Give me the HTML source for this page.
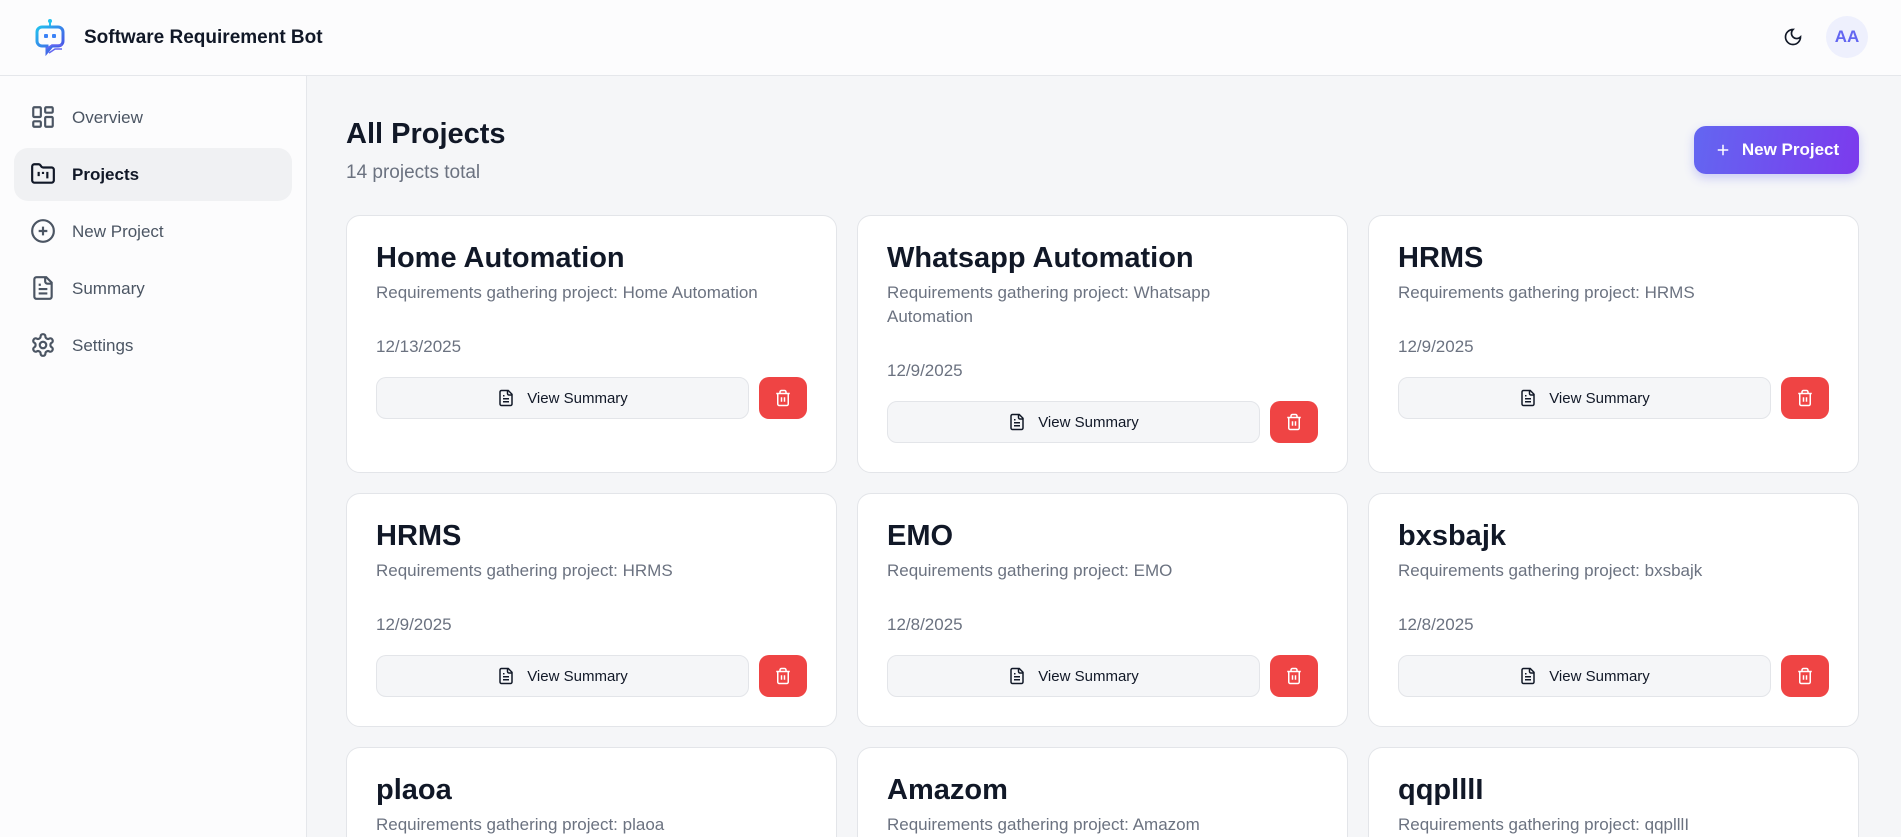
<!DOCTYPE html>
<html style="width:1901px;height:837px;overflow:hidden"><head><meta charset="utf-8"><style>
*{box-sizing:border-box;margin:0;padding:0}
body{width:1901px;height:837px;overflow:hidden;font-family:"Liberation Sans",sans-serif;background:#f5f6f8;color:#111827;position:relative}
.hdr{position:absolute;left:0;top:0;width:1901px;height:76px;background:#fcfcfd;border-bottom:1px solid #e5e7eb}
.hdr .title{position:absolute;left:84px;top:27px;font-size:19px;font-weight:600;color:#111827}
.side{position:absolute;left:0;top:76px;width:307px;height:761px;background:#fcfcfd;border-right:1px solid #e5e7eb}
.nav{position:absolute;left:14px;width:278px;height:53px;border-radius:14px;display:flex;align-items:center}
.nav svg{position:absolute;left:16px;top:13px}
.nav span{position:absolute;left:58px;font-size:17px;color:#4b5563}
.nav.act{background:#f0f1f3}
.nav.act span{color:#111827;font-weight:600}
h1{position:absolute;left:346px;top:118px;font-size:29px;font-weight:700;color:#111827;white-space:nowrap}
.sub{position:absolute;left:346px;top:162px;font-size:19px;color:#6b7280;white-space:nowrap}
.np{position:absolute;left:1694px;top:126px;width:165px;height:48px;border-radius:12px;background:linear-gradient(100deg,#6366f1,#7c3aed);color:#fff;font-size:17px;font-weight:700;display:flex;align-items:center;justify-content:center;gap:10px;box-shadow:0 4px 10px rgba(99,102,241,.3)}
.clip{position:absolute;left:0;top:0;width:1901px;height:837px;overflow:hidden}
.grid{position:absolute;left:346px;top:215px;width:1514px;display:grid;grid-template-columns:491px 491px 491px;column-gap:20px;row-gap:20px}
.card{background:#fff;border:1px solid #e3e5e9;border-radius:14px;padding:26px 29px 29px}
.card.last{height:90px;overflow:hidden;border-bottom:none;border-bottom-left-radius:0;border-bottom-right-radius:0}
.card h2{font-size:29px;line-height:32px;font-weight:700;color:#111827}
.card .d{margin-top:7px;font-size:17px;line-height:24px;color:#6b7280}
.card .dt{margin-top:30px;font-size:17px;line-height:24px;color:#6b7280}
.row{margin-top:18px;display:flex;gap:10px;height:42px}
.vs{flex:1;border:1px solid #e3e5e9;background:#f5f6f8;border-radius:10px;display:flex;align-items:center;justify-content:center;gap:12px;font-size:15px;font-weight:500;color:#111827}
.del{width:48px;border-radius:10px;background:#ef4444;display:flex;align-items:center;justify-content:center}
</style></head><body>
<div class="clip">
<div class="hdr">
<svg style="position:absolute;left:34px;top:18px" width="32" height="40" viewBox="0 0 32 40"><defs><linearGradient id="g" x1="0" y1="0" x2="1" y2="1"><stop offset="0" stop-color="#22c1ee"/><stop offset="1" stop-color="#4f46e5"/></linearGradient></defs>
<line x1="16" y1="3" x2="16" y2="9" stroke="#22c1ee" stroke-width="2"/><circle cx="16" cy="3" r="2" fill="#22c1ee"/>
<path d="M8 9h16a5 5 0 0 1 5 5v9a5 5 0 0 1-5 5h-6l-5 6v-6H8a5 5 0 0 1-5-5v-9a5 5 0 0 1 5-5z" fill="none" stroke="url(#g)" stroke-width="3"/>
<rect x="10" y="16" width="4" height="4" rx="1" fill="#3b82f6"/><rect x="18" y="16" width="4" height="4" rx="1" fill="#3b82f6"/>
<path d="M12 31l6-4h10M15 35l6-4h7" stroke="#6366f1" stroke-width="1.5" fill="none"/></svg>
<div class="title">Software Requirement Bot</div>
<svg style="position:absolute;left:1783px;top:27px" width="20" height="20" viewBox="0 0 24 24" fill="none" stroke="#111827" stroke-width="2" stroke-linecap="round"><path d="M12 3a6 6 0 0 0 9 9 9 9 0 1 1-9-9z"/></svg>
<div style="position:absolute;left:1826px;top:16px;width:42px;height:42px;border-radius:50%;background:#eef0fd;color:#6366f1;font-size:17px;font-weight:600;display:flex;align-items:center;justify-content:center">AA</div>
</div>
<div class="side">
<div class="nav" style="top:15px"><svg width="26" height="26" viewBox="0 0 24 24" fill="none" stroke="#4b5563" stroke-width="2"><rect x="3" y="3" width="7" height="9" rx="1"/><rect x="14" y="3" width="7" height="5" rx="1"/><rect x="14" y="12" width="7" height="9" rx="1"/><rect x="3" y="16" width="7" height="5" rx="1"/></svg><span>Overview</span></div>
<div class="nav act" style="top:72px"><svg width="26" height="26" viewBox="0 0 24 24" fill="none" stroke="#111827" stroke-width="2"><path d="M4 20h16a2 2 0 0 0 2-2V8a2 2 0 0 0-2-2h-7.9a2 2 0 0 1-1.7-.9l-.8-1.2A2 2 0 0 0 7.9 3H4a2 2 0 0 0-2 2v13a2 2 0 0 0 2 2z"/><path d="M8 10v4M12 10v2M16 10v6"/></svg><span>Projects</span></div>
<div class="nav" style="top:129px"><svg width="26" height="26" viewBox="0 0 24 24" fill="none" stroke="#4b5563" stroke-width="2"><circle cx="12" cy="12" r="10"/><path d="M8 12h8M12 8v8"/></svg><span>New Project</span></div>
<div class="nav" style="top:186px"><svg width="26" height="26" viewBox="0 0 24 24" fill="none" stroke="#4b5563" stroke-width="2"><path d="M15 2H6a2 2 0 0 0-2 2v16a2 2 0 0 0 2 2h12a2 2 0 0 0 2-2V7z"/><path d="M14 2v4a2 2 0 0 0 2 2h4M10 9H8M16 13H8M16 17H8"/></svg><span>Summary</span></div>
<div class="nav" style="top:243px"><svg width="26" height="26" viewBox="0 0 24 24" fill="none" stroke="#4b5563" stroke-width="2"><path d="M12.22 2h-.44a2 2 0 0 0-2 2v.18a2 2 0 0 1-1 1.73l-.43.25a2 2 0 0 1-2 0l-.15-.08a2 2 0 0 0-2.73.73l-.22.38a2 2 0 0 0 .73 2.73l.15.1a2 2 0 0 1 1 1.72v.51a2 2 0 0 1-1 1.74l-.15.09a2 2 0 0 0-.73 2.73l.22.38a2 2 0 0 0 2.73.73l.15-.08a2 2 0 0 1 2 0l.43.25a2 2 0 0 1 1 1.73V20a2 2 0 0 0 2 2h.44a2 2 0 0 0 2-2v-.18a2 2 0 0 1 1-1.73l.43-.25a2 2 0 0 1 2 0l.15.08a2 2 0 0 0 2.73-.73l.22-.39a2 2 0 0 0-.73-2.73l-.15-.08a2 2 0 0 1-1-1.74v-.5a2 2 0 0 1 1-1.74l.15-.09a2 2 0 0 0 .73-2.73l-.22-.38a2 2 0 0 0-2.73-.73l-.15.08a2 2 0 0 1-2 0l-.43-.25a2 2 0 0 1-1-1.73V4a2 2 0 0 0-2-2z"/><circle cx="12" cy="12" r="3"/></svg><span>Settings</span></div>
</div>
<h1>All Projects</h1>
<div class="sub">14 projects total</div>
<div class="np"><svg width="18" height="18" viewBox="0 0 24 24" fill="none" stroke="#fff" stroke-width="2"><path d="M5 12h14M12 5v14"/></svg>New Project</div>
<div class="grid">
<div class="card"><h2>Home Automation</h2><div class="d">Requirements gathering project: Home Automation</div><div class="dt">12/13/2025</div><div class="row"><div class="vs"><svg width="18" height="18" viewBox="0 0 24 24" fill="none" stroke="#111827" stroke-width="2"><path d="M15 2H6a2 2 0 0 0-2 2v16a2 2 0 0 0 2 2h12a2 2 0 0 0 2-2V7z"/><path d="M14 2v4a2 2 0 0 0 2 2h4M10 9H8M16 13H8M16 17H8"/></svg>View Summary</div><div class="del"><svg width="18" height="18" viewBox="0 0 24 24" fill="none" stroke="#fff" stroke-width="2"><path d="M3 6h18M19 6v14a2 2 0 0 1-2 2H7a2 2 0 0 1-2-2V6M8 6V4a2 2 0 0 1 2-2h4a2 2 0 0 1 2 2v2M10 11v6M14 11v6"/></svg></div></div></div>
<div class="card"><h2>Whatsapp Automation</h2><div class="d">Requirements gathering project: Whatsapp<br>Automation</div><div class="dt">12/9/2025</div><div class="row"><div class="vs"><svg width="18" height="18" viewBox="0 0 24 24" fill="none" stroke="#111827" stroke-width="2"><path d="M15 2H6a2 2 0 0 0-2 2v16a2 2 0 0 0 2 2h12a2 2 0 0 0 2-2V7z"/><path d="M14 2v4a2 2 0 0 0 2 2h4M10 9H8M16 13H8M16 17H8"/></svg>View Summary</div><div class="del"><svg width="18" height="18" viewBox="0 0 24 24" fill="none" stroke="#fff" stroke-width="2"><path d="M3 6h18M19 6v14a2 2 0 0 1-2 2H7a2 2 0 0 1-2-2V6M8 6V4a2 2 0 0 1 2-2h4a2 2 0 0 1 2 2v2M10 11v6M14 11v6"/></svg></div></div></div>
<div class="card"><h2>HRMS</h2><div class="d">Requirements gathering project: HRMS</div><div class="dt">12/9/2025</div><div class="row"><div class="vs"><svg width="18" height="18" viewBox="0 0 24 24" fill="none" stroke="#111827" stroke-width="2"><path d="M15 2H6a2 2 0 0 0-2 2v16a2 2 0 0 0 2 2h12a2 2 0 0 0 2-2V7z"/><path d="M14 2v4a2 2 0 0 0 2 2h4M10 9H8M16 13H8M16 17H8"/></svg>View Summary</div><div class="del"><svg width="18" height="18" viewBox="0 0 24 24" fill="none" stroke="#fff" stroke-width="2"><path d="M3 6h18M19 6v14a2 2 0 0 1-2 2H7a2 2 0 0 1-2-2V6M8 6V4a2 2 0 0 1 2-2h4a2 2 0 0 1 2 2v2M10 11v6M14 11v6"/></svg></div></div></div>
<div class="card"><h2>HRMS</h2><div class="d">Requirements gathering project: HRMS</div><div class="dt">12/9/2025</div><div class="row"><div class="vs"><svg width="18" height="18" viewBox="0 0 24 24" fill="none" stroke="#111827" stroke-width="2"><path d="M15 2H6a2 2 0 0 0-2 2v16a2 2 0 0 0 2 2h12a2 2 0 0 0 2-2V7z"/><path d="M14 2v4a2 2 0 0 0 2 2h4M10 9H8M16 13H8M16 17H8"/></svg>View Summary</div><div class="del"><svg width="18" height="18" viewBox="0 0 24 24" fill="none" stroke="#fff" stroke-width="2"><path d="M3 6h18M19 6v14a2 2 0 0 1-2 2H7a2 2 0 0 1-2-2V6M8 6V4a2 2 0 0 1 2-2h4a2 2 0 0 1 2 2v2M10 11v6M14 11v6"/></svg></div></div></div>
<div class="card"><h2>EMO</h2><div class="d">Requirements gathering project: EMO</div><div class="dt">12/8/2025</div><div class="row"><div class="vs"><svg width="18" height="18" viewBox="0 0 24 24" fill="none" stroke="#111827" stroke-width="2"><path d="M15 2H6a2 2 0 0 0-2 2v16a2 2 0 0 0 2 2h12a2 2 0 0 0 2-2V7z"/><path d="M14 2v4a2 2 0 0 0 2 2h4M10 9H8M16 13H8M16 17H8"/></svg>View Summary</div><div class="del"><svg width="18" height="18" viewBox="0 0 24 24" fill="none" stroke="#fff" stroke-width="2"><path d="M3 6h18M19 6v14a2 2 0 0 1-2 2H7a2 2 0 0 1-2-2V6M8 6V4a2 2 0 0 1 2-2h4a2 2 0 0 1 2 2v2M10 11v6M14 11v6"/></svg></div></div></div>
<div class="card"><h2>bxsbajk</h2><div class="d">Requirements gathering project: bxsbajk</div><div class="dt">12/8/2025</div><div class="row"><div class="vs"><svg width="18" height="18" viewBox="0 0 24 24" fill="none" stroke="#111827" stroke-width="2"><path d="M15 2H6a2 2 0 0 0-2 2v16a2 2 0 0 0 2 2h12a2 2 0 0 0 2-2V7z"/><path d="M14 2v4a2 2 0 0 0 2 2h4M10 9H8M16 13H8M16 17H8"/></svg>View Summary</div><div class="del"><svg width="18" height="18" viewBox="0 0 24 24" fill="none" stroke="#fff" stroke-width="2"><path d="M3 6h18M19 6v14a2 2 0 0 1-2 2H7a2 2 0 0 1-2-2V6M8 6V4a2 2 0 0 1 2-2h4a2 2 0 0 1 2 2v2M10 11v6M14 11v6"/></svg></div></div></div>
<div class="card last"><h2>plaoa</h2><div class="d">Requirements gathering project: plaoa</div></div>
<div class="card last"><h2>Amazom</h2><div class="d">Requirements gathering project: Amazom</div></div>
<div class="card last"><h2>qqplllI</h2><div class="d">Requirements gathering project: qqplllI</div></div>
</div>
</div>
</body></html>
